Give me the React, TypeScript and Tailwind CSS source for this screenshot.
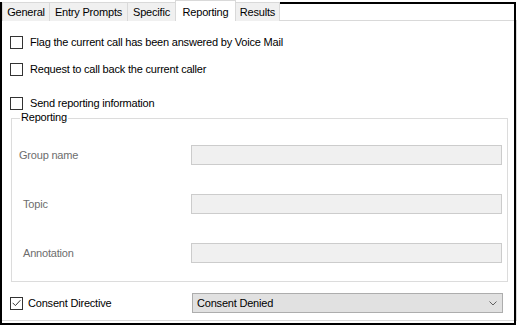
import React from "react";

const tabs = [
  { name: "General", w: "w-[47px]" },
  { name: "Entry Prompts", w: "w-[78px]" },
  { name: "Specific", w: "w-[48px]" },
  { name: "Reporting", w: "w-[61px]", active: true },
  { name: "Results", w: "w-[44px]" },
];

const fields = [
  { label: "Group name", pad: "pl-[7px]" },
  { label: "Topic", pad: "pl-[11px]" },
  { label: "Annotation", pad: "pl-[11px]" },
];

function Check({ checked = false }: { checked?: boolean }) {
  return (
    <span className="w-[13px] h-[13px] shrink-0 border border-[#333333] bg-white flex items-center justify-center">
      {checked && (
        <svg width="9" height="8" viewBox="0 0 9 8">
          <path d="M0.6 3.8 L3.4 6.6 L8.4 1.2" fill="none" stroke="#333333" strokeWidth="1" />
        </svg>
      )}
    </span>
  );
}

function CheckRow({ text, className }: { text: string; className: string }) {
  return (
    <div className={`flex items-center gap-[7px] pl-[8px] h-[13px] ${className}`}>
      <Check />
      <span className="text-black leading-[13px]">{text}</span>
    </div>
  );
}

export default function App() {
  return (
    <div className="relative w-[518px] h-[325px] bg-white overflow-hidden font-['Liberation_Sans',Arial,sans-serif] text-[11px] tracking-[-0.2px]">
      {/* Tab strip */}
      <div className="relative z-10 flex items-end h-[21px] pl-[2px]">
        {tabs.map((t, i) =>
          t.active ? (
            <div
              key={t.name}
              className={`${t.w} h-[21px] bg-white border-t border-x border-[#d9d9d9] flex items-start justify-center pt-[3px] text-black`}
            >
              {t.name}
            </div>
          ) : (
            <div
              key={t.name}
              className={`${t.w} h-[19px] bg-[#f0f0f0] border-t border-[#d9d9d9] flex items-center justify-center text-black ${
                i === 0 ? "border-l" : ""
              } ${i === tabs.length - 1 ? "border-r" : ""} ${
                i > 0 && !tabs[i - 1].active ? "border-l" : ""
              }`}
            >
              {t.name}
            </div>
          )
        )}
      </div>

      {/* Tab page */}
      <div className="-mt-px w-[517px] h-[301px] border border-[#d9d9d9] bg-white flex flex-col pl-px">
        <CheckRow text="Flag the current call has been answered by Voice Mail" className="mt-[15px]" />
        <CheckRow text="Request to call back the current caller" className="mt-[14px]" />
        <CheckRow text="Send reporting information" className="mt-[21px]" />

        {/* Reporting group */}
        <div className="relative mt-[8px] ml-[9px] w-[497px] h-[164px] border border-[#dcdcdc]">
          <span className="absolute -top-[8px] left-[8px] bg-white px-px leading-[13px] text-black">Reporting</span>
          <div className="grid grid-cols-[179px_311px] gap-y-[29px] mt-[26px]">
            {fields.map((f) => (
              <React.Fragment key={f.label}>
                <div className={`h-[20px] flex items-center text-[#6d6d6d] ${f.pad}`}>{f.label}</div>
                <div className="h-[20px] bg-[#f0f0f0] border border-[#cccccc]" />
              </React.Fragment>
            ))}
          </div>
        </div>

        {/* Consent row */}
        <div className="flex items-center mt-[11px] pl-[8px]">
          <div className="w-[182px] flex items-center gap-[5px]">
            <Check checked />
            <span className="text-black">Consent Directive</span>
          </div>
          <div className="w-[311px] h-[20px] bg-[#e1e1e1] border border-[#adadad] flex items-center justify-between pl-[4px] pr-[5px] text-black">
            <span>Consent Denied</span>
            <svg width="8" height="5" viewBox="0 0 8 5">
              <path d="M0.5 0.5 L4 4 L7.5 0.5" fill="none" stroke="#606060" strokeWidth="1" />
            </svg>
          </div>
        </div>
      </div>

      {/* Black outline */}
      <div className="absolute left-0 top-[2px] w-[516px] h-[323px] border-2 border-black pointer-events-none" />
    </div>
  );
}
